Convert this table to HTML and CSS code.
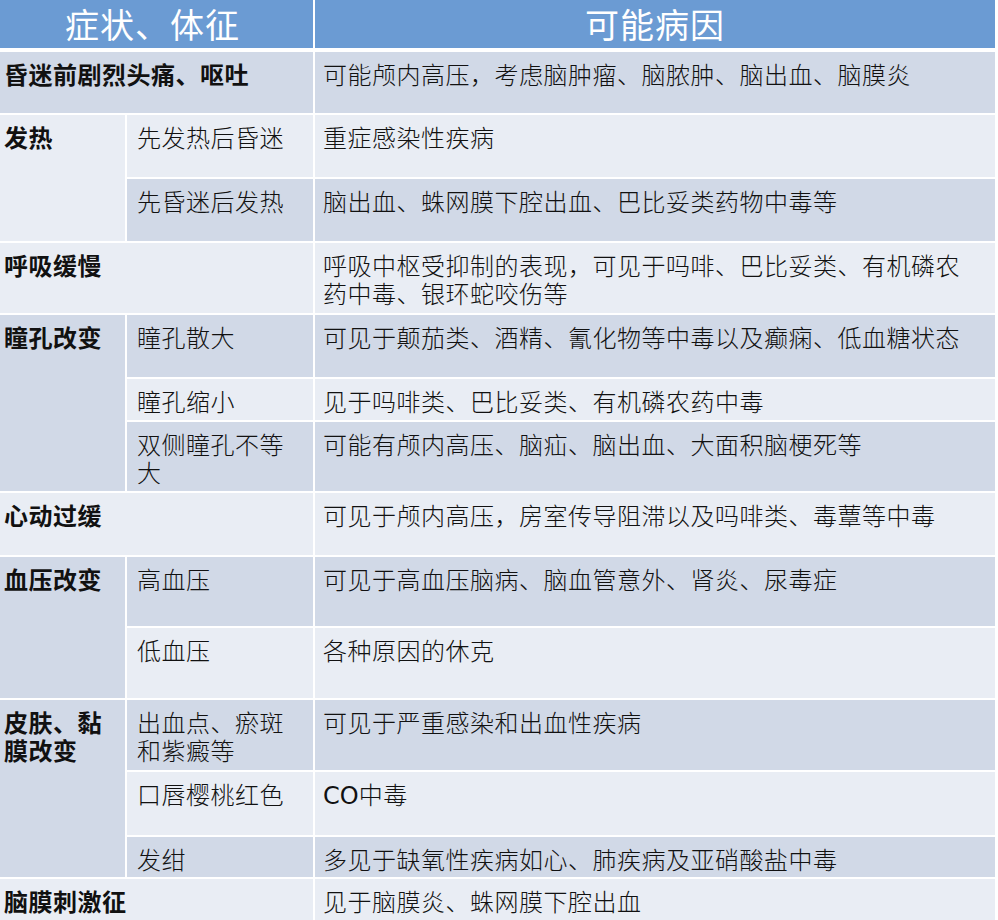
FILE: index.html
```html
<!DOCTYPE html>
<html lang="zh-CN">
<head>
<meta charset="utf-8">
<title>昏迷的伴随症状</title>
<link rel="stylesheet" href="styles.css">
</head>
<body>
<div class="table">
  <div class="hd hd-a">症状、体征</div>
  <div class="hd hd-b">可能病因</div>

  <div class="c1 w2 dark r0">昏迷前剧烈头痛、呕吐</div>
  <div class="c3 dark r0">可能颅内高压，考虑脑肿瘤、脑脓肿、脑出血、脑膜炎</div>

  <div class="c1 light r1 s2">发热</div>
  <div class="c2 light r1">先发热后昏迷</div>
  <div class="c3 light r1">重症感染性疾病</div>
  <div class="c2 dark r2">先昏迷后发热</div>
  <div class="c3 dark r2">脑出血、蛛网膜下腔出血、巴比妥类药物中毒等</div>

  <div class="c1 w2 light r3">呼吸缓慢</div>
  <div class="c3 light r3">呼吸中枢受抑制的表现，可见于吗啡、巴比妥类、有机磷农药中毒、银环蛇咬伤等</div>

  <div class="c1 dark r4 s3">瞳孔改变</div>
  <div class="c2 dark r4">瞳孔散大</div>
  <div class="c3 dark r4">可见于颠茄类、酒精、氰化物等中毒以及癫痫、低血糖状态</div>
  <div class="c2 light r5">瞳孔缩小</div>
  <div class="c3 light r5">见于吗啡类、巴比妥类、有机磷农药中毒</div>
  <div class="c2 dark r6">双侧瞳孔不等大</div>
  <div class="c3 dark r6">可能有颅内高压、脑疝、脑出血、大面积脑梗死等</div>

  <div class="c1 w2 light r7">心动过缓</div>
  <div class="c3 light r7">可见于颅内高压，房室传导阻滞以及吗啡类、毒蕈等中毒</div>

  <div class="c1 dark r8 s2">血压改变</div>
  <div class="c2 dark r8">高血压</div>
  <div class="c3 dark r8">可见于高血压脑病、脑血管意外、肾炎、尿毒症</div>
  <div class="c2 light r9">低血压</div>
  <div class="c3 light r9">各种原因的休克</div>

  <div class="c1 dark r10 s3">皮肤、黏膜改变</div>
  <div class="c2 dark r10">出血点、瘀斑和紫癜等</div>
  <div class="c3 dark r10">可见于严重感染和出血性疾病</div>
  <div class="c2 light r11">口唇樱桃红色</div>
  <div class="c3 light r11"><span class="latin">CO</span>中毒</div>
  <div class="c2 dark r12">发绀</div>
  <div class="c3 dark r12">多见于缺氧性疾病如心、肺疾病及亚硝酸盐中毒</div>

  <div class="c1 w2 light r13">脑膜刺激征</div>
  <div class="c3 light r13">见于脑膜炎、蛛网膜下腔出血</div>
</div>
</body>
</html>
```

FILE: styles.css
```css
html, body {
  margin: 0;
  padding: 0;
  background: #ffffff;
}

body {
  font-family: "Noto Sans CJK SC", "Noto Sans", sans-serif;
  color: #111111;
}

.table {
  display: grid;
  width: 995px;
  grid-template-columns: 125px 186px 680px;
  grid-template-rows: 50px 61px 62px 62px 70px 62px 41px 69px 62px 69px 70px 70px 63px 40px 41px;
  column-gap: 2px;
  row-gap: 2px;
  background: #ffffff;
}

.hd {
  background: #6b9bd3;
  color: #ffffff;
  font-size: 34px;
  font-weight: 400;
  line-height: 48px;
  height: 48px;
  text-align: center;
  letter-spacing: 1px;
  grid-row: 1;
}

.hd-a {
  grid-column: 1 / span 2;
  padding-right: 8px;
}

.hd-b {
  grid-column: 3;
}

.dark { background: #d1d9e7; }
.light { background: #e9edf4; }

.c1, .c2, .c3 {
  font-size: 24px;
  line-height: 28px;
  letter-spacing: 0.5px;
  padding-top: 8px;
  box-sizing: border-box;
}

.c1 {
  grid-column: 1;
  font-weight: 700;
  padding-left: 4px;
  padding-right: 10px;
}

.c1.w2 { grid-column: 1 / span 2; }

.c2 {
  grid-column: 2;
  font-weight: 300;
  padding-left: 10px;
  padding-right: 22px;
}

.c3 {
  grid-column: 3;
  font-weight: 300;
  padding-left: 8px;
  padding-right: 22px;
}

.s2 { grid-row-end: span 2; }
.s3 { grid-row-end: span 3; }

.r0 { grid-row-start: 2; }
.r1 { grid-row-start: 3; }
.r2 { grid-row-start: 4; }
.r3 { grid-row-start: 5; }
.r4 { grid-row-start: 6; }
.r5 { grid-row-start: 7; }
.r6 { grid-row-start: 8; }
.r7 { grid-row-start: 9; }
.r8 { grid-row-start: 10; }
.r9 { grid-row-start: 11; }
.r10 { grid-row-start: 12; }
.r11 { grid-row-start: 13; }
.r12 { grid-row-start: 14; }
.r13 { grid-row-start: 15; }

.latin {
  font-family: "DejaVu Sans", "Noto Sans", sans-serif;
  font-weight: 400;
  letter-spacing: 0;
}
```
